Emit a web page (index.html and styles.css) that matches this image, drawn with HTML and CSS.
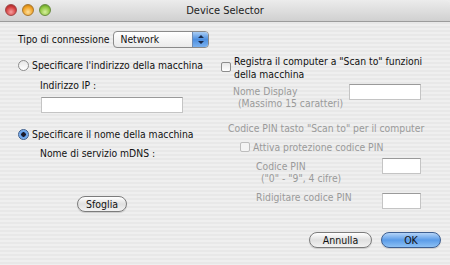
FILE: index.html
```html
<!DOCTYPE html>
<html lang="it">
<head>
    <meta charset="UTF-8">
    <title>Device Selector</title>
    <link rel="stylesheet" href="styles.css">
</head>
<body>
    <div class="window">
        <div class="titlebar">
            <div class="lights">
                <span class="light red"></span>
                <span class="light yellow"></span>
                <span class="light green"></span>
            </div>
            <div class="title">Device Selector</div>
        </div>

        <div class="content">
            <div class="conn-row">
                <span>Tipo di connessione</span>
                <div class="select">
                    <span class="select-text">Network</span>
                    <span class="stepper">
                        <svg width="8" height="11" viewBox="0 0 8 11"><path d="M1 4 L4 1 L7 4 Z M1 7 L4 10 L7 7 Z" fill="#1a2a4a"/></svg>
                    </span>
                </div>
            </div>

            <div class="columns">
                <!-- left column -->
                <div class="left">
                    <label class="radio-row">
                        <span class="radio"></span>
                        <span>Specificare l'indirizzo della macchina</span>
                    </label>
                    <div class="sub-label">Indirizzo IP :</div>
                    <div class="field ip-field"></div>

                    <label class="radio-row second">
                        <span class="radio on"></span>
                        <span>Specificare il nome della macchina</span>
                    </label>
                    <div class="sub-label mdns">Nome di servizio mDNS :</div>

                    <div class="browse-wrap">
                        <button class="pill">Sfoglia</button>
                    </div>
                </div>

                <!-- right column -->
                <div class="right">
                    <label class="check-row">
                        <span class="checkbox"></span>
                        <span>Registra il computer a "Scan to" funzioni<br>della macchina</span>
                    </label>

                    <div class="field-row display-row">
                        <div class="muted">Nome Display<br><span class="indent">(Massimo 15 caratteri)</span></div>
                        <div class="field display-field"></div>
                    </div>

                    <div class="muted pin-title">Codice PIN tasto "Scan to" per il computer</div>

                    <label class="check-row disabled">
                        <span class="checkbox"></span>
                        <span class="muted">Attiva protezione codice PIN</span>
                    </label>

                    <div class="field-row pin-row">
                        <div class="muted">Codice PIN<br><span class="indent">("0" - "9", 4 cifre)</span></div>
                        <div class="field pin-field"></div>
                    </div>

                    <div class="field-row pin-row retype">
                        <div class="muted">Ridigitare codice PIN</div>
                        <div class="field pin-field"></div>
                    </div>
                </div>
            </div>

            <div class="actions">
                <button class="pill cancel">Annulla</button>
                <button class="pill default">OK</button>
            </div>
        </div>
    </div>
</body>
</html>
```

FILE: styles.css
```css
body {
    margin: 0;
    padding: 0;
    font-family: 'DejaVu Sans Condensed', 'Liberation Sans', sans-serif;
    font-size: 10.3px;
    color: #111;
    background: #ececec;
}

.window {
    width: 450px;
    height: 265px;
    overflow: hidden;
    border-top-right-radius: 5px;
    background: repeating-linear-gradient(#efefef 0 2px, #e8e8e8 2px 4px);
    white-space: nowrap;
}

.titlebar {
    position: relative;
    height: 21px;
    background: linear-gradient(#ececec, #d0d0d0);
    border-bottom: 1px solid #9c9c9c;
    display: flex;
    align-items: center;
    justify-content: center;
}

.lights {
    position: absolute;
    left: 5px;
    top: 4px;
    display: flex;
    gap: 5px;
}

.light {
    width: 12px;
    height: 12px;
    border-radius: 50%;
    box-sizing: border-box;
    border: 1px solid #888;
}

.red {
    background: radial-gradient(circle at 50% 70%, #f8a0a0, #d13c3c 60%, #8c2020);
    border-color: #a04848;
}

.yellow {
    background: radial-gradient(circle at 50% 70%, #fce0a0, #f0a020 60%, #a86a10);
    border-color: #a87830;
}

.green {
    background: radial-gradient(circle at 50% 70%, #d8f0a0, #8cc43c 60%, #4c8020);
    border-color: #6a8c40;
}

.title {
    font-size: 11px;
    color: #222;
}

.content {
    padding: 8px 0 0 18px;
}

.conn-row {
    display: flex;
    align-items: center;
    gap: 4px;
    height: 18px;
}

.select {
    width: 96px;
    height: 17px;
    box-sizing: border-box;
    border: 1px solid #8a8a8a;
    border-radius: 4px;
    background: linear-gradient(#ffffff, #eaeaea);
    display: flex;
    align-items: center;
    overflow: hidden;
}

.select-text {
    flex: 1;
    padding-left: 6px;
}

.stepper {
    width: 15px;
    height: 100%;
    background: linear-gradient(#a9cdf5, #4d8fe0 50%, #7ab1ef);
    display: flex;
    align-items: center;
    justify-content: center;
    border-left: 1px solid #6d8bb4;
}

.columns {
    display: grid;
    grid-template-columns: 203px 1fr;
    margin-top: 11px;
}

.radio-row,
.check-row {
    display: flex;
    align-items: flex-start;
    gap: 3px;
    line-height: 13px;
}

.radio {
    width: 11px;
    height: 11px;
    margin-top: 1px;
    box-sizing: border-box;
    border-radius: 50%;
    border: 1px solid #8c8c8c;
    background: linear-gradient(#e6e6e6, #ffffff);
    flex-shrink: 0;
}

.radio.on {
    border-color: #3a5c8c;
    background: radial-gradient(circle, #1a1a2a 0 2px, #5d9ae6 2.5px, #a6cbf4);
}

.sub-label {
    margin: 7px 0 0 22px;
    line-height: 13px;
}

.sub-label.mdns {
    margin-top: 6px;
}

.field {
    background: #fff;
    box-sizing: border-box;
    border: 1px solid #c4c4c4;
    border-top-color: #9a9a9a;
    height: 16px;
}

.ip-field {
    width: 142px;
    margin: 5px 0 0 23px;
}

.radio-row.second {
    margin-top: 15px;
}

.browse-wrap {
    margin: 36px 0 0 59px;
}

.pill {
    font-family: 'DejaVu Sans Condensed', 'Liberation Sans', sans-serif;
    font-size: 10.5px;
    height: 16px;
    padding: 0;
    border: 1px solid #7c7c7c;
    border-radius: 8px;
    background: linear-gradient(#ffffff, #e0e0e0 50%, #f2f2f2);
    color: #111;
    box-shadow: 0 1px 1px rgba(0, 0, 0, 0.15);
}

.browse-wrap .pill {
    width: 50px;
}

.right {
    margin-top: -4px;
}

.checkbox {
    width: 10px;
    height: 10px;
    margin-top: 7px;
    box-sizing: border-box;
    border: 1px solid #8c8c8c;
    border-radius: 2px;
    background: linear-gradient(#e8e8e8, #ffffff);
    flex-shrink: 0;
}

.muted {
    color: #9a9a9a;
    line-height: 12px;
}

.indent {
    padding-left: 5px;
}

.field-row {
    display: flex;
    justify-content: space-between;
    align-items: flex-start;
}

.display-row {
    margin: 4px 0 0 12px;
    width: 188px;
}

.display-field {
    width: 72px;
    margin-top: -1px;
}

.pin-title {
    margin: 13px 0 0 7px;
}

.check-row.disabled {
    margin: 7px 0 0 19px;
}

.check-row.disabled .checkbox {
    margin-top: 1px;
    border-color: #bdbdbd;
    background: #f4f4f4;
}

.pin-row {
    margin: 5px 0 0 35px;
    width: 165px;
}

.pin-row .muted {
    margin-top: 2px;
}

.pin-field {
    width: 39px;
}

.pin-row.retype {
    margin-top: 9px;
}

.pin-row.retype .muted {
    margin-top: -2px;
}

.actions {
    display: flex;
    justify-content: flex-end;
    gap: 9px;
    margin: 20px 9px 0 0;
}

.actions .pill {
    width: 63px;
}

.actions .default {
    width: 60px;
    border-color: #3e5f91;
    background: linear-gradient(#b4d4f8, #5b9ce8 50%, #8cc0f4);
}
```
